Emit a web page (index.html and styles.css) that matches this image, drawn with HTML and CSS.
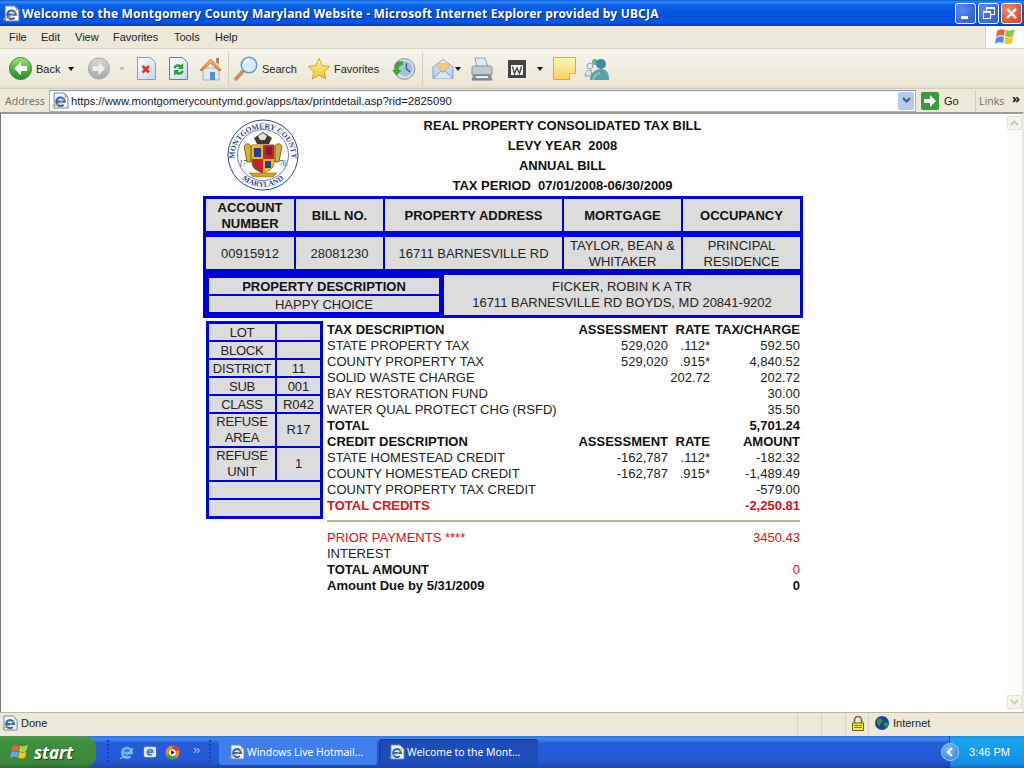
FILE: index.html
```html
<!DOCTYPE html>
<html lang="en">
<head>
	<meta charset="UTF-8">
	<title>Welcome to the Montgomery County Maryland Website</title>
	<link rel="stylesheet" href="styles.css">
</head>
<body>
	<svg class="defs" width="0" height="0">
		<defs>
			<linearGradient id="greenBall" x1="0" y1="0" x2="0" y2="1"><stop offset="0" stop-color="#a6e27c"/><stop offset=".55" stop-color="#4cb03c"/><stop offset="1" stop-color="#2a8a2a"/></linearGradient>
			<linearGradient id="greyBall" x1="0" y1="0" x2="0" y2="1"><stop offset="0" stop-color="#d8d8d4"/><stop offset="1" stop-color="#a8a8a4"/></linearGradient>
			<linearGradient id="docFill" x1="0" y1="0" x2="1" y2="1"><stop offset="0" stop-color="#ffffff"/><stop offset="1" stop-color="#c6d6f0"/></linearGradient>
			<linearGradient id="note" x1="0" y1="0" x2="0" y2="1"><stop offset="0" stop-color="#fff6b8"/><stop offset="1" stop-color="#fbd25a"/></linearGradient>
			<linearGradient id="star" x1="0" y1="0" x2="0" y2="1"><stop offset="0" stop-color="#fff4a0"/><stop offset="1" stop-color="#f4c41e"/></linearGradient>
			<linearGradient id="roof" x1="0" y1="0" x2="0" y2="1"><stop offset="0" stop-color="#f8b868"/><stop offset="1" stop-color="#e08530"/></linearGradient>
			<linearGradient id="envelope" x1="0" y1="0" x2="0" y2="1"><stop offset="0" stop-color="#eaf3fc"/><stop offset="1" stop-color="#a9c6ea"/></linearGradient>
			<g id="ie">
				<path d="M2 1h9l4 4v10H2z" fill="#f7f9fc" stroke="#6d87ad"/>
				<path d="M4.500 9h7.500a4 4 0 1 0-1.200 3" fill="none" stroke="#2a66c4" stroke-width="2"/>
				<path d="M0 13c3 1 10-3 13-9" fill="none" stroke="#d9a520" stroke-width="1.100"/>
			</g>
		</defs>
	</svg>

	<div class="window">
		<header class="titlebar">
			<svg class="title-icon" width="17" height="17" viewBox="0 0 16 16"><use href="#ie"/></svg>
			<span class="title-text">Welcome to the Montgomery County Maryland Website - Microsoft Internet Explorer provided by UBCJA</span>
			<div class="winbtns">
				<span class="winbtn"><i class="min-bar"></i></span>
				<span class="winbtn"><i class="max-back"></i><i class="max-front"></i></span>
				<span class="winbtn close">
					<svg width="21" height="21" viewBox="0 0 21 21"><path d="M6 6l9 9M15 6l-9 9" stroke="#fff" stroke-width="2.400"/></svg>
				</span>
			</div>
		</header>

		<nav class="menubar">
			<ul class="menu">
				<li class="m-file">File</li>
				<li class="m-edit">Edit</li>
				<li class="m-view">View</li>
				<li class="m-fav">Favorites</li>
				<li class="m-tools">Tools</li>
				<li class="m-help">Help</li>
			</ul>
			<div class="flagbox">
				<svg width="21" height="20" viewBox="0 0 21 20">
					<path d="M2 4c3-2 5-2 8-1l-1 6c-3-1-5-1-8 1z" fill="#e8613a"/>
					<path d="M11 3c3 1 5 1 9-1l-2 7c-3 2-6 1-8 0z" fill="#8cc63f"/>
					<path d="M1 11c3-2 5-2 8-1l-1 6c-3-1-5-1-8 1z" fill="#4b8fe0"/>
					<path d="M10 10c3 1 5 1 8 0l-1 6c-3 2-6 1-8 0z" fill="#f6c52c"/>
				</svg>
			</div>
		</nav>

		<div class="toolbar">
			<svg class="tb tb-back" width="23" height="23" viewBox="0 0 24 24">
				<circle cx="12" cy="12" r="11.500" fill="url(#greenBall)" stroke="#2f8a2f"/>
				<path d="M12.500 5l-7 7 7 7v-4.500H19v-5h-6.500z" fill="#fff"/>
			</svg>
			<span class="tb-label l-back">Back</span>
			<i class="caret c-back"></i>
			<svg class="tb tb-fwd" width="22" height="23" viewBox="0 0 24 24">
				<circle cx="12" cy="12" r="11.500" fill="url(#greyBall)" stroke="#a0a09c"/>
				<path d="M11.500 5l7 7-7 7v-4.500H5v-5h6.500z" fill="#f2f2f0"/>
			</svg>
			<i class="caret faint c-fwd"></i>
			<svg class="tb tb-stop" width="19" height="23" viewBox="0 0 19 23">
				<path d="M.5.500h13l5 5v17H.5z" fill="url(#docFill)" stroke="#7f9cc8"/>
				<path d="M5.500 9l6.500 6.500M12 9l-6.500 6.500" stroke="#dc3a26" stroke-width="2.800"/>
			</svg>
			<svg class="tb tb-refresh" width="19" height="23" viewBox="0 0 19 23">
				<path d="M.5.500h13l5 5v17H.5z" fill="url(#docFill)" stroke="#5f7fb0"/>
				<path d="M4.500 11c0-3 4.500-5 7.500-3l2-1.500V12H8.500l1.800-1.800C8 9.300 7 10 6.800 11.500zM14.500 14c0 3-4.500 5-7.500 3l-2 1.500V13h5.500l-1.800 1.800c2.300.9 3.300.2 3.500-1.300z" fill="#2ea03a"/>
			</svg>
			<svg class="tb tb-home" width="23" height="24" viewBox="0 0 23 24">
				<path d="M4 11h16v12H4z" fill="#dfe8f4" stroke="#a4b4c8"/>
				<path d="M1 13L11.500 2 22 13l-2 1-8.500-8L3 14z" fill="url(#roof)" stroke="#d07c2c"/>
				<path d="M11 15h5v8h-5z" fill="#5d8cc4"/>
				<path d="M17 1h3v7l-3-3z" fill="#a3836a"/>
			</svg>
			<i class="tb-sep s-one"></i>
			<svg class="tb tb-search" width="24" height="25" viewBox="0 0 24 25">
				<path d="M9 15l-7 8" stroke="#d08a54" stroke-width="3.500" stroke-linecap="round"/>
				<circle cx="15" cy="9" r="7.800" fill="#d6ecfb" stroke="#6d93c8" stroke-width="1.500"/>
				<path d="M10.500 8c1-3 3-4 6-3.500" stroke="#fff" stroke-width="1.800" fill="none"/>
			</svg>
			<span class="tb-label l-search">Search</span>
			<svg class="tb tb-star" width="24" height="24" viewBox="0 0 25 24">
				<path d="M12.500 1l3.400 7.400 7.900.9-5.900 5.300 1.700 7.900-7.100-4.100-7.100 4.100 1.700-7.900L1.200 9.300l7.900-.9z" fill="url(#star)" stroke="#d2a420"/>
			</svg>
			<span class="tb-label l-fav">Favorites</span>
			<svg class="tb tb-history" width="24" height="24" viewBox="0 0 25 24">
				<circle cx="13" cy="12" r="10.800" fill="#d4dde4" stroke="#7f8f90"/>
				<circle cx="14" cy="12" r="7.500" fill="#a5bfdc"/>
				<path d="M15 6v6l4 3" stroke="#2f5f9c" stroke-width="1.500" fill="none"/>
				<path d="M3 7a9 9 0 0 1 9-3l-1 4c-3 0-4 2-4 5h3l-5 6-5-6h3z" fill="#3fa63a"/>
			</svg>
			<i class="tb-sep s-two"></i>
			<svg class="tb tb-mail" width="22" height="24" viewBox="0 0 23 24">
				<path d="M1 10L11.500 2 22 10v12H1z" fill="url(#envelope)" stroke="#7e9cc4"/>
				<path d="M4.500 10l2.500-3.500h9l2.500 3.500-7 5z" fill="#f6c98a" stroke="#d8a768" stroke-width=".7"/>
				<path d="M1 22l8.500-8 2 1.500 2-1.500 8.500 8" fill="#d8e6f6" stroke="#7e9cc4"/>
			</svg>
			<i class="caret c-mail"></i>
			<svg class="tb tb-print" width="24" height="24" viewBox="0 0 24 24">
				<path d="M5 1h10l3 9H7z" fill="#dfe9f6" stroke="#84a0c4"/>
				<path d="M2 11c0-1 1-2 2-2h16c1 0 2 1 2 2v7H2z" fill="#c6cacf" stroke="#858c94"/>
				<path d="M4 18h16l2 5H2z" fill="#8a8f95" stroke="#777d84"/>
				<path d="M6 19h12v2H6z" fill="#eceff2"/>
			</svg>
			<svg class="tb tb-word" width="18" height="18" viewBox="0 0 18 18">
				<path d="M0 0h18v18H0z" fill="#444"/>
				<path d="M3 5h12v10H3z" fill="#f2f2ee"/>
				<path d="M4.500 6.500l2 7 2.500-5.500 2.500 5.500 2-7" fill="none" stroke="#444" stroke-width="1.300"/>
			</svg>
			<i class="caret c-word"></i>
			<svg class="tb tb-note" width="23" height="23" viewBox="0 0 23 23">
				<path d="M.5.500h22v16l-6 6H.5z" fill="url(#note)" stroke="#dca838"/>
				<path d="M22.500 16.500h-6v6" fill="#fff2c4" stroke="#dca838"/>
			</svg>
			<svg class="tb tb-msn" width="25" height="22" viewBox="0 0 25 22">
				<circle cx="6" cy="8" r="3" fill="#e4eaea" stroke="#8ba3ad"/>
				<path d="M1 18c0-4 3-6 6-6l1 6z" fill="#dde4e4" stroke="#8ba3ad"/>
				<circle cx="11" cy="4" r="3" fill="#6fae8c"/>
				<circle cx="17" cy="6" r="5" fill="#3f8ba0"/>
				<path d="M6 22c0-7 5-11 11-11s8 4 8 11z" fill="#5aa0a8"/>
				<path d="M9 22c1-4 3-6 7-7" stroke="#8fc8a8" stroke-width="2" fill="none"/>
			</svg>
		</div>

		<div class="addressbar">
			<span class="addr-label">Address</span>
			<div class="addr-box">
				<svg class="addr-icon" width="17" height="17" viewBox="0 0 16 16"><use href="#ie"/></svg>
				<span class="addr-url">https://www.montgomerycountymd.gov/apps/tax/printdetail.asp?rid=2825090</span>
				<span class="addr-drop"><svg width="9" height="7" viewBox="0 0 9 7"><path d="M1 1l3.500 3.500L8 1" fill="none" stroke="#3a5a90" stroke-width="2"/></svg></span>
			</div>
			<svg class="go-icon" width="18" height="18" viewBox="0 0 18 18">
				<rect width="18" height="18" rx="2" fill="#3a9a3e"/>
				<path d="M9 3l6 6-6 6v-4H3V7h6z" fill="#fff"/>
			</svg>
			<span class="go-label">Go</span>
			<i class="addr-sep"></i>
			<span class="links-label">Links</span>
			<span class="links-more">»</span>
		</div>

		<div class="content">
			<main class="page">
				<div class="bill">
					<div class="bill-head">
						<div class="seal-cell">
							<svg class="seal" width="72" height="72" viewBox="0 0 72 72">
								<defs>
									<path id="arcTop" d="M7.500 38A28.500 28.500 0 1 1 64.500 38"/>
									<path id="arcBot" d="M14 59A32 32 0 0 0 58 59"/>
								</defs>
								<circle cx="36" cy="36" r="35" fill="#fff" stroke="#2b4a8a"/>
								<circle cx="36" cy="36" r="25.500" fill="#fff" stroke="#2b4a8a" stroke-width=".7"/>
								<text class="seal-text"><textPath href="#arcTop" startOffset="50%" text-anchor="middle">MONTGOMERY COUNTY</textPath></text>
								<text class="seal-text"><textPath href="#arcBot" startOffset="50%" text-anchor="middle">MARYLAND</textPath></text>
								<text class="seal-year" x="12" y="47">17</text>
								<text class="seal-year" x="52" y="47">76</text>
								<path d="M25 26h22v17c0 6-5 9-11 11-6-2-11-5-11-11z" fill="#c8202c" stroke="#7a5a12"/>
								<path d="M25 26h11v14H25zM36 40h11v3c0 6-5 9-11 11z" fill="#e8b820"/>
								<path d="M27 29h7v9h-7z" fill="#24408e"/>
								<path d="M38 42h6v7h-6z" fill="#24408e"/>
								<path d="M39 28h6v8h-6z" fill="#8a1a2a"/>
								<path d="M17 27c2-3 5-3 7 0v16h-4zM55 27c-2-3-5-3-7 0v16h4z" fill="#d8b030" stroke="#4a3c10" stroke-width=".7"/>
								<path d="M27 19l9-6 9 6-3 6H30z" fill="#3a3a30"/>
								<path d="M31 17l5-3 4 3-2 4h-5z" fill="#e6e2d0"/>
								<path d="M22 54h28l-4 4H26z" fill="#d8a020" stroke="#7a5a12" stroke-width=".5"/>
							</svg>
						</div>
						<div class="head-text">
							<div>REAL PROPERTY CONSOLIDATED TAX BILL</div>
							<div>LEVY YEAR&nbsp; 2008</div>
							<div>ANNUAL BILL</div>
							<div>TAX PERIOD&nbsp; 07/01/2008-06/30/2009</div>
						</div>
					</div>

					<div class="acct">
						<div class="cell th">ACCOUNT NUMBER</div>
						<div class="cell th">BILL NO.</div>
						<div class="cell th">PROPERTY ADDRESS</div>
						<div class="cell th">MORTGAGE</div>
						<div class="cell th">OCCUPANCY</div>
						<div class="cell">00915912</div>
						<div class="cell">28081230</div>
						<div class="cell">16711 BARNESVILLE RD</div>
						<div class="cell">TAYLOR, BEAN &amp; WHITAKER</div>
						<div class="cell">PRINCIPAL RESIDENCE</div>
					</div>

					<div class="owner">
						<div class="prop-desc">
							<div class="prop-title">PROPERTY DESCRIPTION</div>
							<div class="prop-value">HAPPY CHOICE</div>
						</div>
						<div class="owner-name">FICKER, ROBIN K A TR<br>16711 BARNESVILLE RD BOYDS, MD 20841-9202</div>
					</div>

					<div class="detail">
						<table class="lot">
							<tr><td class="k">LOT</td><td class="v"></td></tr>
							<tr><td class="k">BLOCK</td><td class="v"></td></tr>
							<tr><td class="k">DISTRICT</td><td class="v">11</td></tr>
							<tr><td class="k">SUB</td><td class="v">001</td></tr>
							<tr><td class="k">CLASS</td><td class="v">R042</td></tr>
							<tr class="tall"><td class="k">REFUSE AREA</td><td class="v">R17</td></tr>
							<tr class="tall"><td class="k">REFUSE UNIT</td><td class="v">1</td></tr>
							<tr><td class="blank" colspan="2"></td></tr>
							<tr><td class="blank" colspan="2"></td></tr>
						</table>

						<table class="tax">
							<tr class="b"><td class="d">TAX DESCRIPTION</td><td class="a">ASSESSMENT</td><td class="r">RATE</td><td class="c">TAX/CHARGE</td></tr>
							<tr><td>STATE PROPERTY TAX</td><td class="a">529,020</td><td class="r">.112*</td><td class="c">592.50</td></tr>
							<tr><td>COUNTY PROPERTY TAX</td><td class="a">529,020</td><td class="r">.915*</td><td class="c">4,840.52</td></tr>
							<tr><td>SOLID WASTE CHARGE</td><td class="a"></td><td class="r">202.72</td><td class="c">202.72</td></tr>
							<tr><td>BAY RESTORATION FUND</td><td class="a"></td><td class="r"></td><td class="c">30.00</td></tr>
							<tr><td>WATER QUAL PROTECT CHG (RSFD)</td><td class="a"></td><td class="r"></td><td class="c">35.50</td></tr>
							<tr class="b"><td>TOTAL</td><td class="a"></td><td class="r"></td><td class="c">5,701.24</td></tr>
							<tr class="b"><td>CREDIT DESCRIPTION</td><td class="a">ASSESSMENT</td><td class="r">RATE</td><td class="c">AMOUNT</td></tr>
							<tr><td>STATE HOMESTEAD CREDIT</td><td class="a">-162,787</td><td class="r">.112*</td><td class="c">-182.32</td></tr>
							<tr><td>COUNTY HOMESTEAD CREDIT</td><td class="a">-162,787</td><td class="r">.915*</td><td class="c">-1,489.49</td></tr>
							<tr><td>COUNTY PROPERTY TAX CREDIT</td><td class="a"></td><td class="r"></td><td class="c">-579.00</td></tr>
							<tr class="b red"><td>TOTAL CREDITS</td><td class="a"></td><td class="r"></td><td class="c">-2,250.81</td></tr>
							<tr class="rule-row"><td colspan="4"><hr class="rule"></td></tr>
							<tr class="red"><td>PRIOR PAYMENTS ****</td><td class="a"></td><td class="r"></td><td class="c">3450.43</td></tr>
							<tr><td>INTEREST</td><td class="a"></td><td class="r"></td><td class="c"></td></tr>
							<tr class="b"><td>TOTAL AMOUNT</td><td class="a"></td><td class="r"></td><td class="c zero">0</td></tr>
							<tr class="b"><td>Amount Due by 5/31/2009</td><td class="a"></td><td class="r"></td><td class="c">0</td></tr>
						</table>
					</div>
				</div>
			</main>
			<div class="scrollbar">
				<span class="sb-btn"><svg width="9" height="6" viewBox="0 0 9 6"><path d="M1 5l3.500-3.500L8 5" fill="none" stroke="#c9c9bd" stroke-width="2"/></svg></span>
				<span class="sb-btn"><svg width="9" height="6" viewBox="0 0 9 6"><path d="M1 1l3.500 3.500L8 1" fill="none" stroke="#c9c9bd" stroke-width="2"/></svg></span>
			</div>
		</div>

		<footer class="statusbar">
			<svg class="status-icon" width="16" height="16" viewBox="0 0 16 16"><use href="#ie"/></svg>
			<span class="status-done">Done</span>
			<i class="st-sep s1"></i><i class="st-sep s2"></i><i class="st-sep s3"></i>
			<svg class="lock" width="12" height="15" viewBox="0 0 12 15">
				<path d="M2.500 7V4a3.500 3.500 0 0 1 7 0v3" fill="none" stroke="#6a6a30" stroke-width="1.600"/>
				<path d="M.5 7h11v7.500H.5z" fill="#fbe84a" stroke="#6a5c10"/>
				<path d="M2 9.500h8M2 11.500h8" stroke="#8a7a20"/>
			</svg>
			<i class="st-sep s4"></i>
			<svg class="globe" width="14" height="14" viewBox="0 0 15 15">
				<circle cx="7.500" cy="7.500" r="7.500" fill="#1f3fa0"/>
				<path d="M3 3c3-1 5 0 5 2S5 8 5 11C3 10 1 6 3 3zM10 7c2-1 4 0 4 2s-2 4-3 3-2-4-1-5z" fill="#2f9a3a"/>
			</svg>
			<span class="status-zone">Internet</span>
		</footer>
	</div>

	<footer class="taskbar">
		<div class="start">
			<svg width="19" height="18" viewBox="0 0 21 20">
				<path d="M2 4c3-2 5-2 8-1l-1 6c-3-1-5-1-8 1z" fill="#e8613a"/>
				<path d="M11 3c3 1 5 1 9-1l-2 7c-3 2-6 1-8 0z" fill="#a5d84a"/>
				<path d="M1 11c3-2 5-2 8-1l-1 6c-3-1-5-1-8 1z" fill="#6ba3ea"/>
				<path d="M10 10c3 1 5 1 8 0l-1 6c-3 2-6 1-8 0z" fill="#f6c52c"/>
			</svg>
			<span class="start-text">start</span>
		</div>
		<i class="grip g1"></i>
		<svg class="ql ql-ie" width="14" height="16" viewBox="0 0 16 16">
			<path d="M3.500 9h10a5.500 5.500 0 1 0-1.600 3.900" fill="none" stroke="#6fb2ee" stroke-width="3"/>
			<path d="M0 15c3 1 11-4 15-12" fill="none" stroke="#b9dcf8"/>
		</svg>
		<svg class="ql ql-mail" width="14" height="16" viewBox="0 0 16 16">
			<rect x="1" y="2" width="14" height="12" rx="2" fill="#dfe9f6"/>
			<path d="M5 8h6a3 3 0 1 0-1 2.500" fill="none" stroke="#3f7fc8" stroke-width="2"/>
		</svg>
		<svg class="ql ql-media" width="15" height="15" viewBox="0 0 16 16">
			<circle cx="8" cy="8" r="7.500" fill="#e8862c"/>
			<path d="M8 .5a7.500 7.500 0 0 1 7 5L8 8z" fill="#d83a30"/>
			<path d="M1 11a7.500 7.500 0 0 0 11 3L8 8z" fill="#3aa040"/>
			<circle cx="8" cy="8" r="3.600" fill="#fff"/>
			<path d="M6.500 5.500l4 2.500-4 2.500z" fill="#222"/>
		</svg>
		<span class="ql-more">»</span>
		<i class="grip g2"></i>
		<div class="task">
			<svg width="16" height="16" viewBox="0 0 16 16"><use href="#ie"/></svg>
			<span>Windows Live Hotmail...</span>
		</div>
		<div class="task active">
			<svg width="16" height="16" viewBox="0 0 16 16"><use href="#ie"/></svg>
			<span>Welcome to the Mont...</span>
		</div>
		<div class="tray">
			<span class="tray-btn"><svg width="8" height="10" viewBox="0 0 8 10"><path d="M6 1L2 5l4 4" fill="none" stroke="#fff" stroke-width="2.200"/></svg></span>
			<span class="clock">3:46 PM</span>
		</div>
	</footer>
</body>
</html>
```

FILE: styles.css
```css
* {
	box-sizing: border-box;
}
html, body {
	margin: 0;
	height: 768px;
	overflow: hidden;
}
body {
	display: flex;
	flex-direction: column;
	background: #ece9d8;
	font: 11px "Liberation Sans", Arial, sans-serif;
	color: #222;
}
.defs {
	position: absolute;
}
.window {
	display: flex;
	flex-direction: column;
	height: 736px;
}

/* title bar */
.titlebar {
	display: flex;
	align-items: center;
	height: 26px;
	flex: none;
	padding-left: 3px;
	background: linear-gradient(#0a57d8 0, #2f8cf6 2px, #0a60ea 5px, #0354dc 14px, #0457e4 22px, #0340b8 26px);
}
.title-icon {
	flex: none;
}
.title-text {
	margin-left: 2px;
	color: #fff;
	font: bold 12px "Noto Sans", sans-serif;
	letter-spacing: 0.18px;
	white-space: nowrap;
	text-shadow: 1px 1px 0 #0a2a90;
}
.winbtns {
	display: flex;
	gap: 2px;
	margin-left: auto;
	padding-right: 2px;
}
.winbtn {
	position: relative;
	display: block;
	width: 21px;
	height: 21px;
	border: 1px solid #fff;
	border-radius: 3px;
	background: radial-gradient(circle at 30% 30%, #5b8cf0, #2a56d0);
}
.winbtn.close {
	background: radial-gradient(circle at 30% 30%, #ea8a6c, #d0401e);
}
.winbtn.close svg {
	position: absolute;
	left: -1px;
	top: -1px;
}
.min-bar {
	position: absolute;
	left: 5px;
	top: 12px;
	width: 7px;
	height: 3px;
	background: #fff;
}
.max-back, .max-front {
	position: absolute;
	border: 1px solid #fff;
	border-top-width: 2px;
}
.max-back {
	left: 7px;
	top: 3px;
	width: 9px;
	height: 8px;
}
.max-front {
	left: 4px;
	top: 7px;
	width: 8px;
	height: 8px;
	background: #3f6fdf;
}

/* menu */
.menubar {
	display: flex;
	justify-content: space-between;
	height: 23px;
	flex: none;
	background: #ece9d8;
	border-bottom: 1px solid #d8d5c4;
}
.menu {
	display: flex;
	list-style: none;
	margin: 0;
	padding: 0;
	align-items: center;
}
.m-file { margin-left: 9px; width: 32px; }
.m-edit { width: 34px; }
.m-view { width: 38px; }
.m-fav { width: 61px; }
.m-tools { width: 41px; }
.flagbox {
	display: flex;
	align-items: center;
	justify-content: center;
	width: 39px;
	background: #fff;
	border-left: 1px solid #d8d5c4;
}

/* toolbar */
.toolbar {
	display: flex;
	align-items: center;
	height: 40px;
	flex: none;
	padding-left: 9px;
	background: linear-gradient(#f6f4ec, #ece9d8 85%, #e2dfcc);
	border-bottom: 1px solid #cfccba;
}
.tb {
	flex: none;
}
.tb-label {
	flex: none;
}
.caret {
	flex: none;
	width: 0;
	height: 0;
	border: 3px solid transparent;
	border-top: 4px solid #111;
	border-bottom: 0;
}
.caret.faint {
	border-top-color: #c4c2b4;
}
.l-back { margin-left: 4px; width: 24px; }
.c-back { margin-left: 8px; }
.tb-fwd { margin-left: 14px; }
.c-fwd { margin-left: 9px; }
.tb-stop { margin-left: 12px; }
.tb-refresh { margin-left: 13px; }
.tb-home { margin-left: 11px; }
.tb-sep {
	flex: none;
	width: 1px;
	height: 34px;
	background: #d3d0bf;
}
.s-one { margin-left: 6px; }
.tb-search { margin-left: 5px; }
.l-search { margin-left: 4px; width: 33px; }
.tb-star { margin-left: 12px; }
.l-fav { margin-left: 3px; width: 46px; }
.tb-history { margin-left: 12px; }
.s-two { margin-left: 6px; }
.tb-mail { margin-left: 9px; }
.c-mail { margin-left: 1px; }
.tb-print { margin-left: 9px; }
.tb-word { margin-left: 14px; }
.c-word { margin-left: 11px; }
.tb-note { margin-left: 10px; }
.tb-msn { margin-left: 8px; }

/* address bar */
.addressbar {
	display: flex;
	align-items: center;
	height: 23px;
	flex: none;
	padding-left: 5px;
	background: #ece9d8;
}
.addr-label {
	width: 44px;
	font: 10.500px "Noto Sans", sans-serif;
	color: #77756a;
}
.addr-box {
	display: flex;
	align-items: center;
	width: 867px;
	height: 22px;
	padding: 0 1px 0 2px;
	background: #fff;
	border: 1px solid #a5b4c8;
	border-top-color: #8a96a8;
}
.addr-icon {
	flex: none;
}
.addr-url {
	margin-left: 2px;
	font-size: 11.240px;
	color: #1a1a1a;
	white-space: nowrap;
}
.addr-drop {
	display: flex;
	align-items: center;
	justify-content: center;
	width: 16px;
	height: 18px;
	margin-left: auto;
	background: #b6c9ee;
	border-radius: 2px;
}
.go-icon {
	flex: none;
	margin-left: 5px;
}
.go-label {
	width: 15px;
	margin-left: 5px;
}
.addr-sep {
	flex: none;
	width: 1px;
	height: 22px;
	margin-left: 16px;
	background: #d3d0bf;
}
.links-label {
	width: 24px;
	margin-left: 3px;
	font: 10.500px "Noto Sans", sans-serif;
	color: #77756a;
}
.links-more {
	margin-left: 9px;
	font: bold 13px "Noto Sans", sans-serif;
	color: #111;
	position: relative;
	top: -3px;
}

/* page */
.content {
	display: flex;
	flex: 1;
	min-height: 0;
	background: #fff;
	border-top: 2px solid #9b9a90;
	border-left: 1px solid #777;
	border-right: 2px solid #ece9d8;
}
.page {
	flex: 1;
	min-width: 0;
}
.scrollbar {
	display: flex;
	flex-direction: column;
	justify-content: space-between;
	width: 15px;
	flex: none;
	padding: 2px 0 3px;
	background: #fbfbf7;
}
.sb-btn {
	display: flex;
	align-items: center;
	justify-content: center;
	height: 14px;
	background: #f5f4ea;
	border: 1px solid #e4e2d4;
	border-radius: 2px;
}
.bill {
	width: 600px;
	margin-left: 202px;
	font: 13px "Liberation Sans", Arial, sans-serif;
	color: #222;
}
.bill-head {
	display: flex;
	height: 82px;
}
.seal-cell {
	width: 119px;
	flex: none;
	padding: 5px 0 0 24px;
}
.seal {
	display: block;
}
.seal-text {
	font: bold 7.600px "Liberation Serif", serif;
	fill: #2b4a8a;
}
.seal-year {
	font: italic 7.500px "Liberation Serif", serif;
	fill: #2b4a8a;
}
.head-text {
	flex: 1;
	padding-top: 2px;
	text-align: center;
	font-weight: bold;
	line-height: 20px;
	color: #111;
}

/* account block */
.acct {
	display: grid;
	grid-template-columns: 88px 87px 177px 117px 117px;
	grid-auto-rows: 32px;
	column-gap: 2px;
	row-gap: 6px;
	padding: 3px 3px 6px;
	background: #0000d8;
}
.cell {
	display: flex;
	align-items: center;
	justify-content: center;
	padding: 2px 2px 0;
	background: #dcdcdc;
	text-align: center;
	line-height: 16px;
}
.cell.th {
	font-weight: bold;
	color: #111;
}
.owner {
	display: flex;
	height: 43px;
	padding: 0 3px 3px 6px;
	background: #0000d8;
}
.prop-desc {
	display: flex;
	flex-direction: column;
	gap: 2px;
	width: 230px;
	flex: none;
	padding-top: 3px;
}
.prop-title, .prop-value {
	height: 16px;
	padding-top: 1px;
	line-height: 15px;
	background: #dcdcdc;
	text-align: center;
}
.prop-title {
	font-weight: bold;
	color: #111;
}
.owner-name {
	flex: 1;
	margin-left: 5px;
	padding-top: 4px;
	background: #dcdcdc;
	text-align: center;
	line-height: 16px;
}

/* lot + tax columns */
.detail {
	display: flex;
	align-items: flex-start;
	padding: 3px 0 0 3px;
}
.lot {
	width: 117px;
	flex: none;
	border-collapse: separate;
	border-spacing: 2px;
	border: 1px solid #0000d8;
	background: #0000d8;
	table-layout: fixed;
}
.lot td {
	height: 16px;
	padding: 1px 0 0;
	background: #dcdcdc;
	line-height: 15px;
	text-align: center;
}
.lot .tall td {
	height: 32px;
	padding: 0;
	line-height: 16px;
}
.lot .k {
	width: 66px;
	letter-spacing: -0.2px;
}
.tax {
	width: 473px;
	margin-left: 4px;
	border-collapse: collapse;
	table-layout: fixed;
}
.tax td {
	height: 16px;
	padding: 2px 0 0;
	line-height: 14px;
	white-space: nowrap;
}
.tax .d {
	width: 238px;
}
.tax .a {
	width: 103px;
	text-align: right;
}
.tax .r {
	width: 42px;
	text-align: right;
}
.tax .c {
	width: 90px;
	text-align: right;
}
.tax .b td {
	font-weight: bold;
	color: #111;
}
.tax .red td {
	color: #d2151f;
}
.tax .b .zero {
	color: #d2151f;
	font-weight: normal;
}
.tax .rule-row td {
	padding: 0;
}
.rule {
	margin: 0;
	border: 0;
	border-top: 2px solid #b5b3a2;
}

/* status bar */
.statusbar {
	display: flex;
	align-items: center;
	height: 24px;
	flex: none;
	padding: 0 0 3px 2px;
	background: #ece9d8;
	border-top: 1px solid #b8b6a6;
}
.status-icon {
	flex: none;
}
.status-done {
	flex: 1;
	margin-left: 3px;
}
.st-sep {
	flex: none;
	width: 1px;
	height: 21px;
	background: #d8d5c4;
}
.s2 { margin-left: 23px; }
.s3 { margin-left: 23px; }
.lock {
	flex: none;
	margin-left: 6px;
}
.s4 { margin-left: 4px; }
.globe {
	flex: none;
	margin-left: 6px;
}
.status-zone {
	width: 131px;
	margin-left: 4px;
}

/* taskbar */
.taskbar {
	display: flex;
	align-items: center;
	height: 32px;
	flex: none;
	background: linear-gradient(#2a72e4 0, #3f8df0 3px, #245ddb 7px, #2459d6 24px, #1c46ae 32px);
	color: #fff;
}
.start {
	display: flex;
	align-items: center;
	gap: 5px;
	width: 96px;
	height: 32px;
	flex: none;
	padding-left: 10px;
	background: linear-gradient(#4a9a48, #3c8f3c 20%, #3b8a3a 80%, #2c6e2c);
	border-radius: 0 12px 12px 0;
}
.start-text {
	font: italic bold 17px "Noto Sans", sans-serif;
	text-shadow: 1px 1px 1px #1a4a1a;
}
.grip {
	flex: none;
	width: 2px;
	height: 24px;
	background: repeating-linear-gradient(#1a3f9c 0 2px, transparent 2px 4px);
}
.g1 { margin-left: 11px; }
.ql {
	flex: none;
}
.ql-ie { margin-left: 11px; }
.ql-mail { margin-left: 9px; }
.ql-media { margin-left: 8px; }
.ql-more {
	flex: none;
	width: 8px;
	margin-left: 13px;
	font-size: 13px;
	color: #a9c5f2;
	position: relative;
	top: -3px;
}
.g2 { margin-left: 8px; }
.task {
	display: flex;
	align-items: center;
	gap: 2px;
	flex: none;
	width: 158px;
	height: 26px;
	margin-left: 8px;
	padding-left: 10px;
	background: #3f7fec;
	border-radius: 3px;
	font: 10.400px "Noto Sans", sans-serif;
	white-space: nowrap;
}
.task svg {
	flex: none;
}
.task.active {
	width: 159px;
	margin-left: 2px;
	background: #1d4eb8;
	box-shadow: inset 1px 1px 2px #163c90;
}
.tray {
	display: flex;
	align-items: center;
	width: 75px;
	height: 32px;
	flex: none;
	margin-left: auto;
	background: linear-gradient(#1a8fe8, #18a4ec 10%, #1590e4 85%, #1668c8);
	border-left: 1px solid #0f4eaa;
}
.tray-btn {
	display: flex;
	align-items: center;
	justify-content: center;
	flex: none;
	width: 18px;
	height: 18px;
	margin-left: -9px;
	border-radius: 50%;
	background: radial-gradient(circle at 40% 35%, #7cc0f6, #2a72d8);
	border: 1px solid #9fd0f5;
}
.clock {
	margin-left: 10px;
	white-space: nowrap;
}
```
